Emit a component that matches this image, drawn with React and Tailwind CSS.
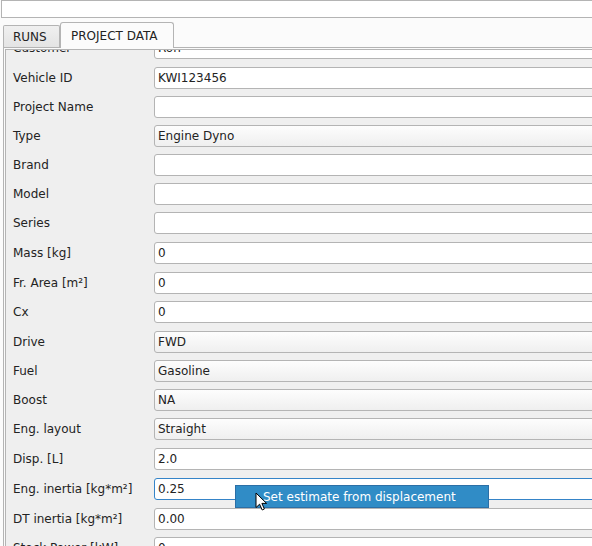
import React from "react";

const rows = [
  { label: "Customer", value: "Ron", kind: "edit", h: "h-[30px]" },
  { label: "Vehicle ID", value: "KWI123456", kind: "edit", h: "h-[29px]" },
  { label: "Project Name", value: "", kind: "edit", h: "h-[29px]" },
  { label: "Type", value: "Engine Dyno", kind: "combo", h: "h-[29px]" },
  { label: "Brand", value: "", kind: "edit", h: "h-[29px]" },
  { label: "Model", value: "", kind: "edit", h: "h-[29px]" },
  { label: "Series", value: "", kind: "edit", h: "h-[30px]" },
  { label: "Mass [kg]", value: "0", kind: "edit", h: "h-[30px]" },
  { label: "Fr. Area [m²]", value: "0", kind: "edit", h: "h-[29px]" },
  { label: "Cx", value: "0", kind: "edit", h: "h-[30px]" },
  { label: "Drive", value: "FWD", kind: "combo", h: "h-[29px]" },
  { label: "Fuel", value: "Gasoline", kind: "combo", h: "h-[29px]" },
  { label: "Boost", value: "NA", kind: "combo", h: "h-[29px]" },
  { label: "Eng. layout", value: "Straight", kind: "combo", h: "h-[30px]" },
  { label: "Disp. [L]", value: "2.0", kind: "edit", h: "h-[30px]" },
  { label: "Eng. inertia [kg*m²]", value: "0.25", kind: "focus", h: "h-[30px]" },
  { label: "DT inertia [kg*m²]", value: "0.00", kind: "edit", h: "h-[29px]" },
  { label: "Stock Power [kW]", value: "0", kind: "edit", h: "h-[29px]" },
];

const boxClass = {
  edit: "border-[#b4b4b4] bg-white",
  combo: "border-[#b4b4b4] bg-gradient-to-b from-[#fdfdfd] to-[#efefef]",
  focus: "border-[#3584c8] bg-white",
};

function Field({ row }) {
  return (
    <div className={`flex items-start ${row.h}`}>
      <div className="w-[141px] h-[22px] flex items-center shrink-0">{row.label}</div>
      <div
        className={`w-[480px] h-[22px] shrink-0 border rounded-[3px] flex items-center pl-[3px] ${boxClass[row.kind]}`}
      >
        {row.value}
      </div>
    </div>
  );
}

function Cursor() {
  return (
    <svg className="absolute left-[255px] top-[492px]" width="13" height="20" viewBox="0 0 13 20">
      <path
        d="M1 1 L1 15.5 L4.6 12.2 L7.2 18 L9.4 17 L6.9 11.4 L11.6 11.4 Z"
        fill="#ffffff"
        stroke="#000000"
        strokeWidth="1"
        strokeLinejoin="round"
      />
    </svg>
  );
}

export default function App() {
  return (
    <div className="relative w-[592px] h-[546px] overflow-hidden bg-[#fbfbfb] text-[12px] text-[#232323] font-['DejaVu_Sans',sans-serif]">
      {/* top line edit */}
      <div className="ml-[1px] w-[640px] h-[18px] border border-[#b4b4b4] bg-white" />

      {/* tabs */}
      <div className="h-[29px] flex items-end pl-[3px]">
        <div className="w-[57px] h-[22px] border border-b-0 border-[#b4b4b4] rounded-t-[2px] bg-gradient-to-b from-[#f0f0f0] to-[#e4e4e4] flex items-center pl-[9px] pt-[1px]">
          RUNS
        </div>
        <div className="relative z-10 w-[114px] h-[26px] -mb-px border border-b-0 border-[#b4b4b4] rounded-t-[3px] bg-[#fbfbfb] flex items-center pl-[10px]">
          PROJECT DATA
        </div>
      </div>

      {/* tab pane */}
      <div className="ml-[3px] w-[640px] h-[520px] border-l border-t border-[#b4b4b4] bg-[#fbfbfb] pt-px pl-px">
        <div className="w-[640px] h-[520px] border-l border-t border-[#b4b4b4] bg-[#efefef] overflow-hidden pl-[7px]">
          <div className="-mt-[13px] flex flex-col">
            {rows.map((r) => (
              <Field key={r.label} row={r} />
            ))}
          </div>
        </div>
      </div>

      {/* context menu */}
      <div className="absolute left-[235px] top-[485px] w-[254px] h-[23px] bg-[#308cc6] border border-[#2b6fa6] text-white flex items-center pl-[27px]">
        Set estimate from displacement
      </div>
      <Cursor />
    </div>
  );
}
